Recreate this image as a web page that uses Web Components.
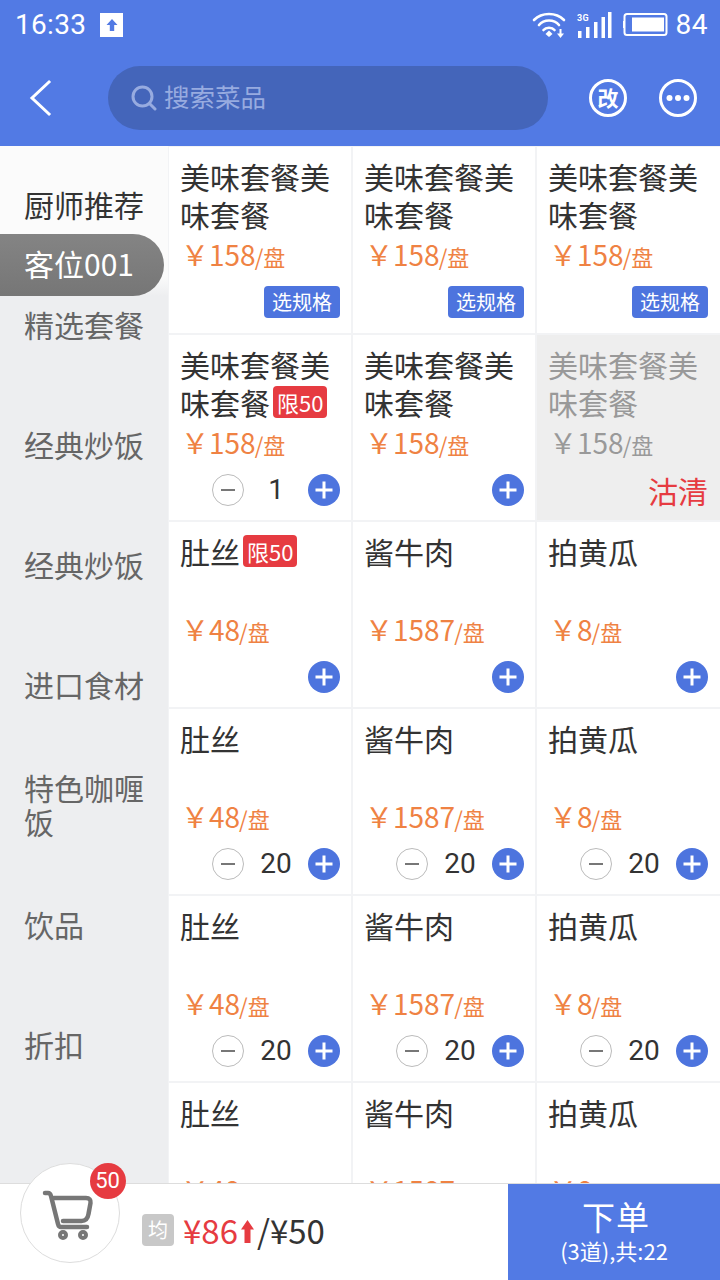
<!DOCTYPE html>
<html>
<head>
<meta charset="utf-8">
<style>
  html, body { margin: 0; padding: 0; }
  body { width: 720px; height: 1280px; overflow: hidden; font-family: "Noto Sans CJK SC", "Noto Sans", sans-serif; background: #fff; }
  order-page { height: 1280px; }
</style>
</head>
<body>
<order-page>
  <app-header slot="header"></app-header>
  <side-menu slot="menu">
    <side-item state="before">厨师推荐</side-item>
    <side-item state="active">客位001</side-item>
    <side-item>精选套餐</side-item>
    <side-item>经典炒饭</side-item>
    <side-item>经典炒饭</side-item>
    <side-item>进口食材</side-item>
    <side-item>特色咖喱饭</side-item>
    <side-item>饮品</side-item>
    <side-item>折扣</side-item>
  </side-menu>
  <dish-grid slot="grid">
    <dish-card name="美味套餐美味套餐" price="158" action="spec"></dish-card>
    <dish-card name="美味套餐美味套餐" price="158" action="spec"></dish-card>
    <dish-card name="美味套餐美味套餐" price="158" action="spec"></dish-card>
    <dish-card name="美味套餐美味套餐" price="158" limit="限50" qty="1"></dish-card>
    <dish-card name="美味套餐美味套餐" price="158"></dish-card>
    <dish-card name="美味套餐美味套餐" price="158" action="soldout"></dish-card>
    <dish-card name="肚丝" price="48" limit="限50"></dish-card>
    <dish-card name="酱牛肉" price="1587"></dish-card>
    <dish-card name="拍黄瓜" price="8"></dish-card>
    <dish-card name="肚丝" price="48" qty="20"></dish-card>
    <dish-card name="酱牛肉" price="1587" qty="20"></dish-card>
    <dish-card name="拍黄瓜" price="8" qty="20"></dish-card>
    <dish-card name="肚丝" price="48" qty="20"></dish-card>
    <dish-card name="酱牛肉" price="1587" qty="20"></dish-card>
    <dish-card name="拍黄瓜" price="8" qty="20"></dish-card>
    <dish-card name="肚丝" price="48"></dish-card>
    <dish-card name="酱牛肉" price="1587"></dish-card>
    <dish-card name="拍黄瓜" price="8"></dish-card>
  </dish-grid>
  <order-bar slot="bar"></order-bar>
</order-page>

<script>
class OrderPage extends HTMLElement {
  constructor() {
    super();
    this.attachShadow({ mode: "open" }).innerHTML = `
      <style>
        :host { display: flex; flex-direction: column; width: 720px; overflow: hidden; }
        .main { display: flex; height: 1037px; overflow: hidden; }
      </style>
      <slot name="header"></slot>
      <div class="main"><slot name="menu"></slot><slot name="grid"></slot></div>
      <slot name="bar"></slot>`;
  }
}

class AppHeader extends HTMLElement {
  constructor() {
    super();
    this.attachShadow({ mode: "open" }).innerHTML = `
      <style>
        :host { display: block; height: 146px; background: #527ae4; color: #fff; box-sizing: border-box; }
        .status { display: flex; align-items: center; height: 50px; padding: 0 12px 0 15px; }
        .time { font: 28px/50px Roboto, sans-serif; letter-spacing: .3px; }
        .up { display: flex; width: 23px; height: 24px; margin-left: 14px; background: #fff; align-items: center; justify-content: center; }
        .right { margin-left: auto; display: flex; align-items: center; }
        .bat { font: 28px/50px Roboto, sans-serif; margin-left: 8px; letter-spacing: .5px; }
        .nav { display: flex; align-items: center; height: 64px; margin-top: 16px; padding-left: 28px; }
        .search { display: flex; align-items: center; width: 440px; height: 64px; margin-left: 54px; border-radius: 32px; background: #4465ba; box-sizing: border-box; padding-left: 23px; color: #97abe0; font-size: 25.500px; }
        .search span { margin-left: 7px; line-height: 34px; padding-bottom: 5px; }
        .round { margin-left: 40px; }
        .round + .round { margin-left: 30px; }
        svg { display: block; }
      </style>
      <div class="status">
        <span class="time">16:33</span>
        <span class="up"><svg width="12" height="14" viewBox="0 0 12 14"><path d="M6 1 11.500 7H8.200v6H3.800V7H.5z" fill="#527ae4"/></svg></span>
        <div class="right">
          <svg width="34" height="28" viewBox="0 0 34 28" fill="none" stroke="#fff" stroke-width="2.600" stroke-linecap="round">
            <path d="M2 9C10 1 24 1 32 9"/><path d="M7 14C12 8 22 8 27 14"/><path d="M11.500 19C14 16 20 16 22.500 19"/>
            <path d="M13.500 23 17 19.500 20.500 23 17 26z" fill="#fff" stroke="none"/>
            <path d="M28.500 18v7" stroke-width="2" stroke-linecap="butt"/><path d="M25 22.500h7L28.500 27z" fill="#fff" stroke="none"/>
          </svg>
          <svg style="margin-left:11px" width="35" height="28" viewBox="0 0 35 28" fill="#fff">
            <rect x="1" y="20" width="3.500" height="7"/><rect x="9" y="16" width="3.500" height="11"/><rect x="17" y="11" width="3.500" height="16"/><rect x="24.500" y="6" width="3.500" height="21"/><rect x="31" y="1" width="3.500" height="26"/>
            <text x="0" y="10" font-family="Roboto, sans-serif" font-size="9" font-weight="700" letter-spacing=".3">3G</text>
          </svg>
          <svg style="margin-left:11px" width="45" height="24" viewBox="0 0 45 24">
            <rect x="1.500" y="1" width="42" height="21" rx="2.500" fill="none" stroke="#fff" stroke-width="2"/>
            <rect x="0" y="8" width="1.500" height="7" fill="#fff"/>
            <rect x="9" y="4.500" width="32" height="14" fill="#fff"/>
          </svg>
          <span class="bat">84</span>
        </div>
      </div>
      <div class="nav">
        <svg width="26" height="40" viewBox="0 0 26 40" fill="none" stroke="#fff" stroke-width="3" stroke-linecap="square"><path d="M21 4 4 20 21 36"/></svg>
        <div class="search">
          <svg width="26" height="26" viewBox="0 0 26 26" fill="none" stroke="#97abe0" stroke-width="3" stroke-linecap="round"><circle cx="11.500" cy="11.500" r="9.500"/><path d="M18.500 18.500 24 24"/></svg>
          <span>搜索菜品</span>
        </div>
        <svg class="round" width="40" height="40" viewBox="0 0 40 40"><circle cx="20" cy="20" r="17.500" fill="none" stroke="#fff" stroke-width="3"/><text x="20" y="28" text-anchor="middle" fill="#fff" font-family="'Noto Sans CJK SC', sans-serif" font-weight="700" font-size="21">改</text></svg>
        <svg class="round" width="40" height="40" viewBox="0 0 40 40"><circle cx="20" cy="20" r="17.500" fill="none" stroke="#fff" stroke-width="3"/><circle cx="11.500" cy="20" r="3" fill="#fff"/><circle cx="20" cy="20" r="3" fill="#fff"/><circle cx="28.500" cy="20" r="3" fill="#fff"/></svg>
      </div>`;
  }
}

class SideMenu extends HTMLElement {
  constructor() {
    super();
    this.attachShadow({ mode: "open" }).innerHTML = `
      <style>
        :host { display: block; flex: none; width: 168px; box-sizing: border-box; padding-top: 30px; background: linear-gradient(#fbfbfb 0, #fbfbfb 130px, #edeef0 150px); }
      </style>
      <slot></slot>`;
  }
}

class SideItem extends HTMLElement {
  constructor() {
    super();
    this.attachShadow({ mode: "open" }).innerHTML = `
      <style>
        :host { display: flex; align-items: center; box-sizing: border-box; width: 164px; height: 60px; margin-bottom: 60px; padding: 0 0 5px 24px; font-size: 30px; line-height: 34px; color: #666; }
        :host([state="before"]) { height: 58px; margin-bottom: 0; padding-bottom: 2px; color: #333; }
        :host([state="active"]) { height: 62px; margin-bottom: 0; padding-bottom: 4px; border-radius: 0 31px 31px 0; background: linear-gradient(#848484, #767676); color: #fff; }
        div { width: 122px; }
      </style>
      <div><slot></slot></div>`;
  }
}

class DishGrid extends HTMLElement {
  constructor() {
    super();
    this.attachShadow({ mode: "open" }).innerHTML = `
      <style>
        :host { display: grid; flex: 1; grid-template-columns: 182px 182px 184px; grid-template-rows: 186px; grid-auto-rows: 185px; column-gap: 2px; row-gap: 2px; padding: 1px 0 0 1px; background: #f2f3f5; align-content: start; }
      </style>
      <slot></slot>`;
  }
}

class DishCard extends HTMLElement {
  connectedCallback() {
    const name = this.getAttribute("name");
    const price = this.getAttribute("price");
    const limit = this.getAttribute("limit");
    const action = this.getAttribute("action");
    const qty = this.getAttribute("qty");
    const plus = `<svg class="btn" viewBox="0 0 32 32"><circle cx="16" cy="16" r="16" fill="#4d74de"/><path d="M16 7.500v17M7.500 16h17" stroke="#fff" stroke-width="3" /></svg>`;
    let foot = plus;
    if (action === "spec") foot = `<span class="spec">选规格</span>`;
    if (action === "soldout") foot = `<span class="out">沽清</span>`;
    if (qty) foot = `<svg class="btn" viewBox="0 0 32 32"><circle cx="16" cy="16" r="15.500" fill="#fff" stroke="#bbb"/><path d="M9 16h14" stroke="#777" stroke-width="2"/></svg><span class="qty">${qty}</span>${plus}`;
    this.attachShadow({ mode: "open" }).innerHTML = `
      <style>
        :host { display: flex; flex-direction: column; background: #fff; box-sizing: border-box; padding: 10px 11px 14px 11px; color: #333; overflow: hidden; }
        :host(:nth-child(3n)) { padding-right: 13px; }
        :host(:nth-child(-n+3)) { padding-bottom: 15px; }
        :host([action="soldout"]) { background: #eee; color: #999; }
        .name { height: 76px; font-size: 30px; line-height: 38px; word-break: break-all; }
        .limit { display: inline-block; height: 32px; margin-left: 3px; padding: 0 4px; border-radius: 4px; background: #e63b41; color: #fff; font-size: 22px; line-height: 32px; vertical-align: 3px; }
        .price { margin-top: 2px; padding-left: 1px; height: 38px; line-height: 38px; font-size: 28px; color: #ef8243; white-space: nowrap; }
        :host([action="soldout"]) .price { color: #999; }
        .price small { font-size: 22px; margin-left: -1px; }
        .foot { display: flex; justify-content: flex-end; align-items: center; margin-top: auto; height: 32px; }
        .btn { display: block; width: 32px; height: 32px; flex: none; }
        .qty { width: 64px; text-align: center; font: 28px/32px Roboto, sans-serif; color: #333; }
        .spec { height: 32px; width: 76px; border-radius: 4px; background: #4d74de; color: #fff; font-size: 20px; line-height: 32px; text-align: center; }
        .out { color: #e63b41; font-size: 30px; line-height: 32px; }
      </style>
      <div class="name">${name}${limit ? `<span class="limit">${limit}</span>` : ""}</div>
      <div class="price">￥${price}<small>/盘</small></div>
      <div class="foot">${foot}</div>`;
  }
}

class OrderBar extends HTMLElement {
  constructor() {
    super();
    this.attachShadow({ mode: "open" }).innerHTML = `
      <style>
        :host { display: flex; position: relative; height: 97px; box-sizing: border-box; border-top: 1px solid #ddd; background: #fff; }
        .cart { position: absolute; left: 20px; top: -21px; width: 100px; height: 100px; box-sizing: border-box; border: 1px solid #ddd; border-radius: 50%; background: #fff; }
        .cart svg { display: block; position: absolute; left: -1px; top: -1px; }
        .badge { position: absolute; left: 90px; top: -21px; width: 36px; height: 36px; border-radius: 50%; background: #e63b41; color: #fff; font: 22px/36px Roboto, sans-serif; text-align: center; text-indent: -1px; }
        .sum { display: flex; align-items: center; margin-left: 142px; padding-bottom: 4px; font-size: 33px; color: #333; white-space: nowrap; }
        .avg { width: 32px; height: 32px; margin-right: 9px; border-radius: 4px; background: #c8c8c8; color: #fff; font-size: 20px; line-height: 32px; text-align: center; }
        .red { color: #e63b41; }
        .sum svg { margin: 2px 3px 0 3px; }
        .go { display: flex; flex-direction: column; align-items: center; justify-content: center; margin-left: auto; width: 212px; background: #527ae4; color: #fff; font-size: 33px; line-height: 38px; letter-spacing: 1px; padding: 0 0 3px 4px; box-sizing: border-box; }
        .go small { font-size: 22px; line-height: 30px; letter-spacing: 0; margin-left: -4px; }
      </style>
      <div class="sum">
        <span class="avg">均</span><span class="red">¥86</span>
        <svg width="13" height="23" viewBox="0 0 13 23"><path d="M6.500 0 13 9.500H9.500V23h-6V9.500H0z" fill="#e63b41"/></svg>
        <span>/¥50</span>
      </div>
      <div class="go">下单<small>(3道),共:22</small></div>
      <div class="cart">
        <svg width="100" height="100" viewBox="0 0 100 100" fill="none" stroke="#777" stroke-width="4.500" stroke-linecap="round" stroke-linejoin="round">
          <path d="M25 30h3c1.500 0 2.500 1 3 3l7 28c.5 2 1.500 3 3 3h26"/>
          <path d="M34 35h32c3.500 0 5 2 4.500 5l-2 11c-.7 4.500-3 7-7 7H43"/>
          <circle cx="43" cy="72" r="3" stroke-width="4"/><circle cx="63" cy="72" r="3" stroke-width="4"/>
        </svg>
      </div>
      <div class="badge">50</div>`;
  }
}

customElements.define("order-page", OrderPage);
customElements.define("app-header", AppHeader);
customElements.define("side-menu", SideMenu);
customElements.define("side-item", SideItem);
customElements.define("dish-grid", DishGrid);
customElements.define("dish-card", DishCard);
customElements.define("order-bar", OrderBar);
</script>
</body>
</html>
